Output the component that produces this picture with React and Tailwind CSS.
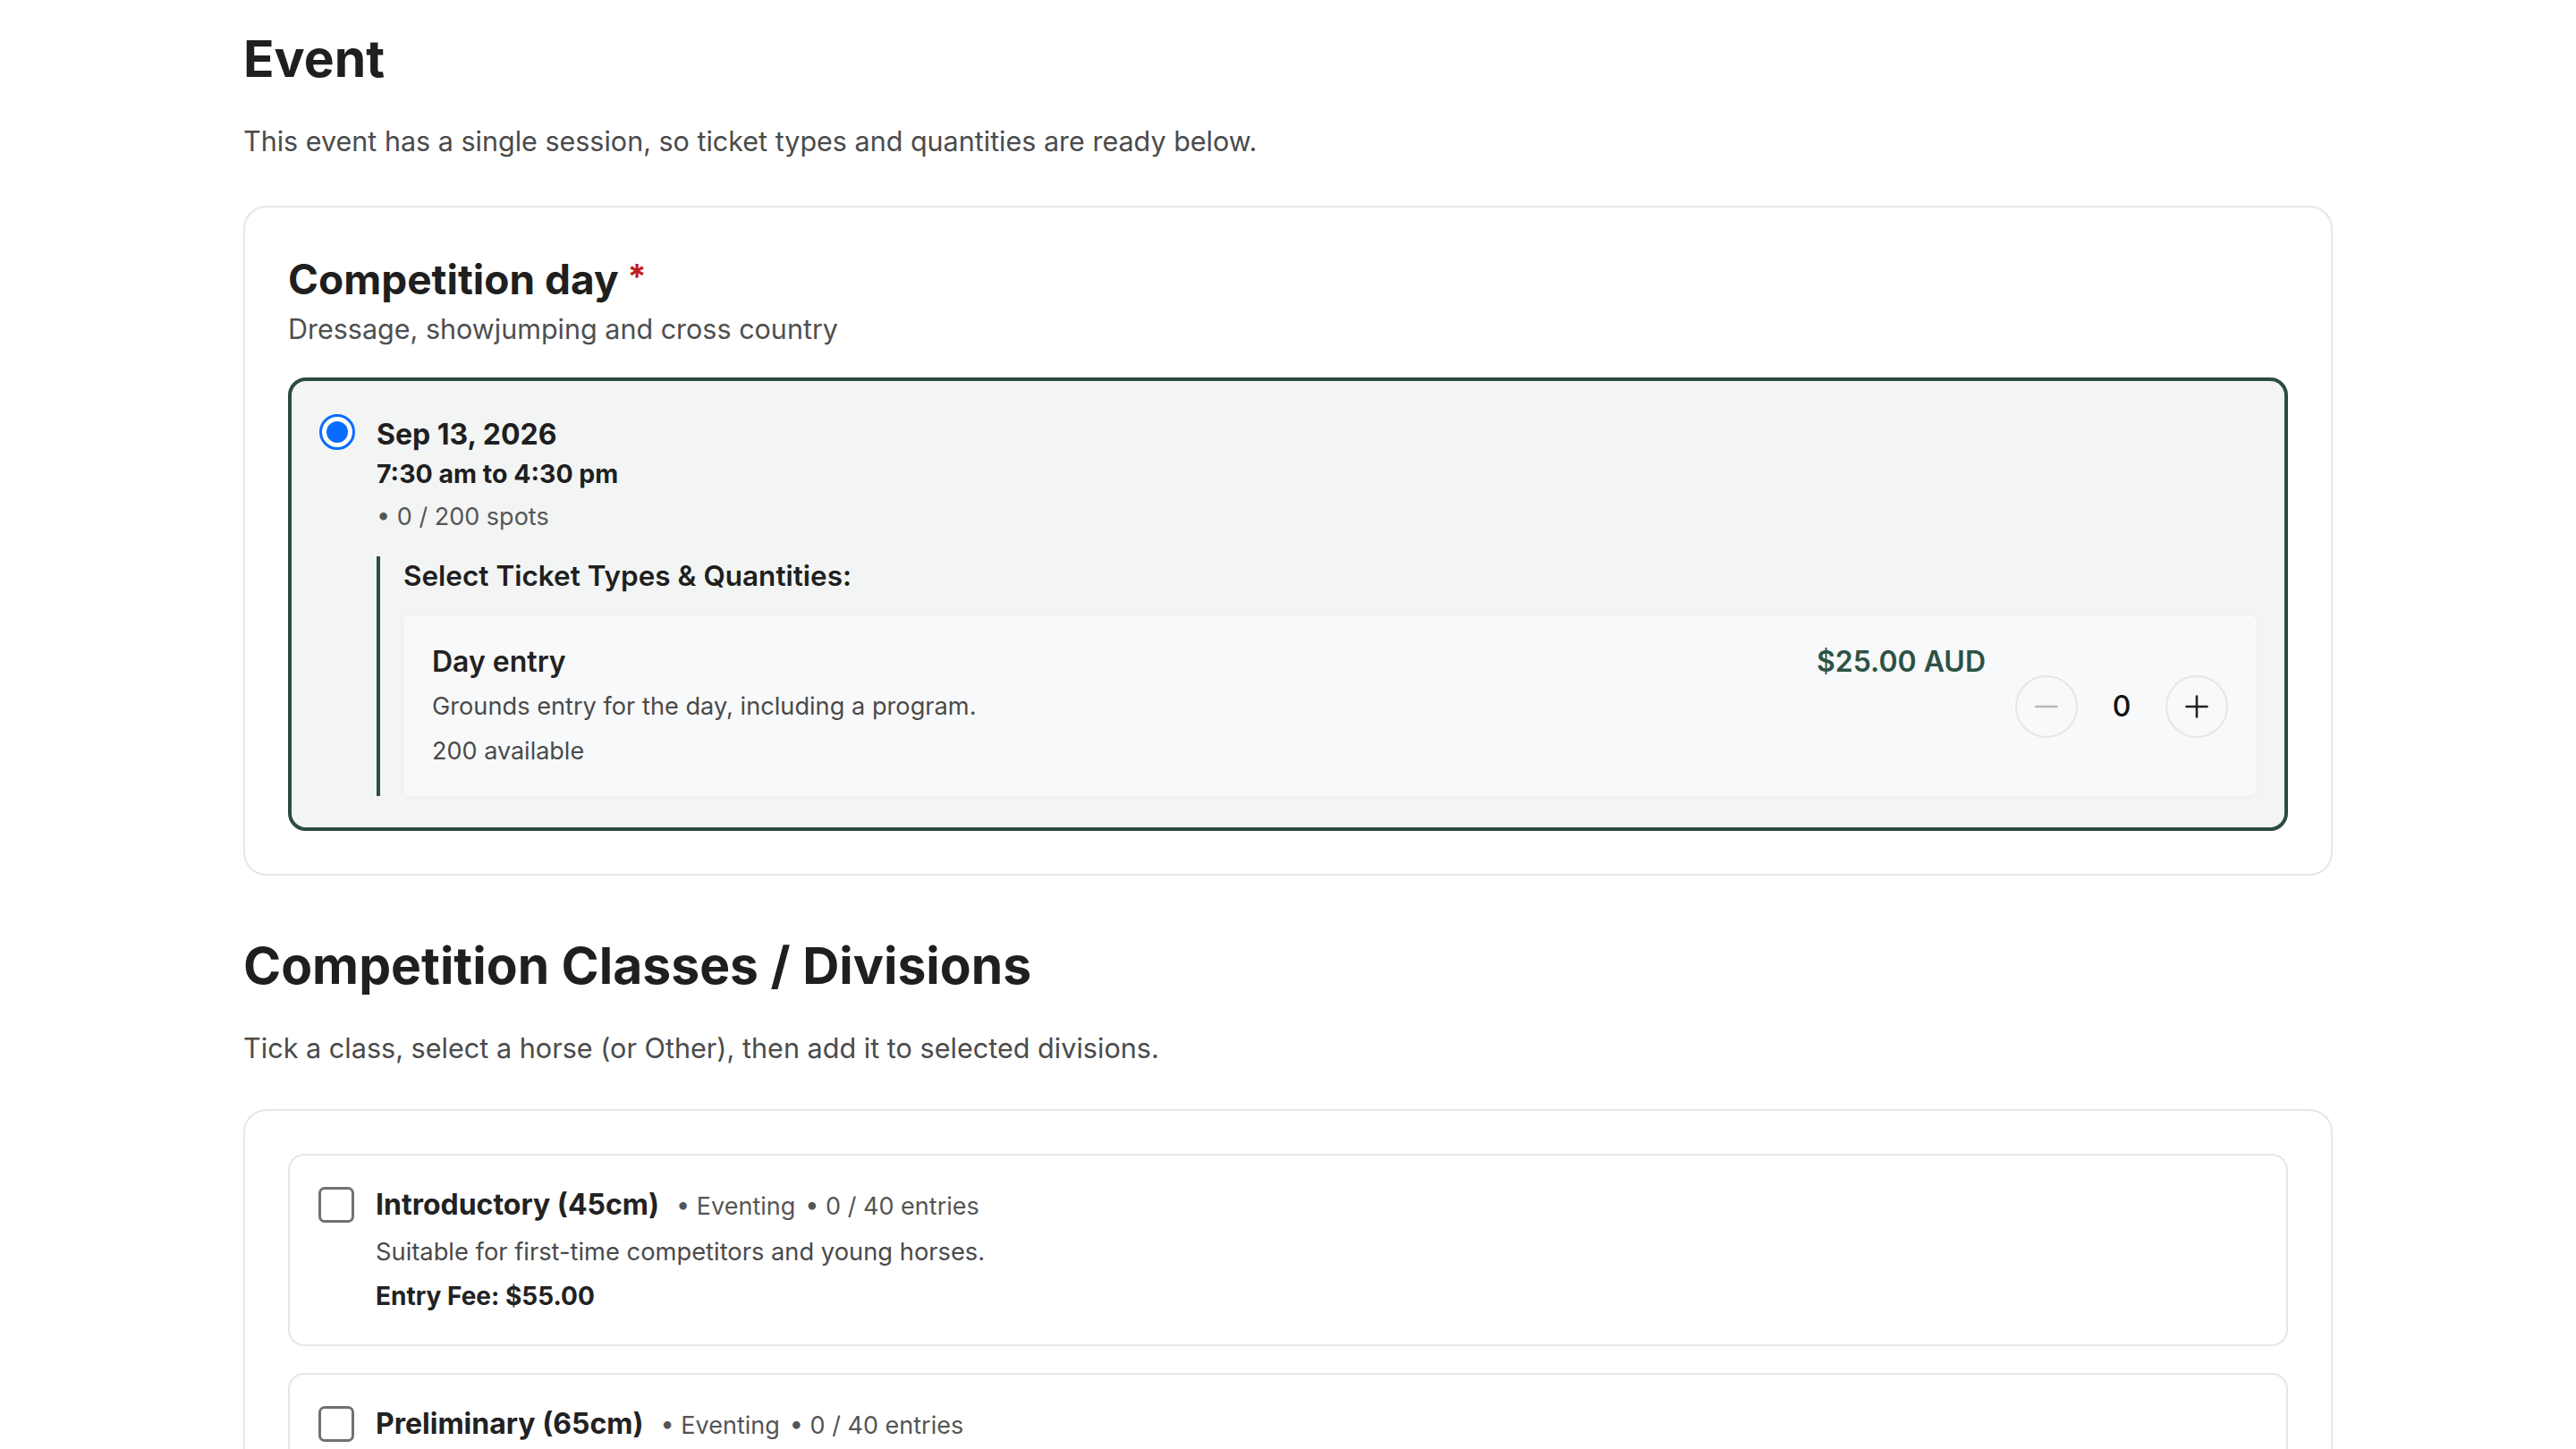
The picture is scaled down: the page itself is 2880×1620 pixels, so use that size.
import React from 'react';

const font = { fontFamily: 'Inter, "Noto Sans", "Liberation Sans", sans-serif' };

function Radio() {
  return (
    <div className="mt-[-1px] flex h-10 w-10 shrink-0 items-center justify-center rounded-full border-[3px] border-[#0a6cff] bg-white">
      <div className="h-[24px] w-[24px] rounded-full bg-[#0a6cff]" />
    </div>
  );
}

function StepButton({ kind }) {
  const stroke = kind === 'minus' ? '#b5b8ba' : '#222222';
  return (
    <button className="flex h-[70px] w-[70px] items-center justify-center rounded-full border-2 border-[#e4e6e8] bg-[#f8f9fa]">
      <svg width="26" height="26" viewBox="0 0 26 26" fill="none" stroke={stroke} strokeWidth="2.6" strokeLinecap="round">
        <line x1="1.5" y1="13" x2="24.5" y2="13" />
        {kind === 'plus' && <line x1="13" y1="1.5" x2="13" y2="24.5" />}
      </svg>
    </button>
  );
}

function TicketRow() {
  return (
    <div className="flex items-center rounded-[8px] bg-[#f8f9fa] px-[32px] pt-[32px] pb-[30px] shadow-[0_0_6px_rgba(0,0,0,0.04)]">
      <div className="flex-1">
        <div className="text-[32px] leading-[40px] font-semibold text-[#222]">Day entry</div>
        <div className="mt-[10px] text-[27.2px] leading-[40px] text-[#4a4a4a]">Grounds entry for the day, including a program.</div>
        <div className="mt-[10px] text-[27px] leading-[40px] text-[#4a4a4a]">200 available</div>
      </div>
      <div className="self-start text-[32px] leading-[40px] font-semibold text-[#2d5243]">$25.00 AUD</div>
      <div className="ml-[33px] flex items-center">
        <StepButton kind="minus" />
        <span className="w-[98px] text-center text-[32px] font-medium text-[#111]">0</span>
        <StepButton kind="plus" />
      </div>
    </div>
  );
}

const classes = [
  { name: 'Introductory (45cm)', desc: 'Suitable for first-time competitors and young horses.', fee: '$55.00' },
  { name: 'Preliminary (65cm)', desc: 'For horses and riders stepping up to their first full event.', fee: '$65.00' },
];

function ClassItem({ c }) {
  return (
    <div className="flex items-start gap-6 rounded-[18px] border-2 border-[#e4e6e8] bg-white px-[32px] pt-[33px] pb-[34px]">
      <div className="mt-[2px] h-10 w-10 shrink-0 rounded-[7px] border-[3px] border-[#6f7173] bg-white" />
      <div>
        <div className="flex items-baseline">
          <span className="text-[32px] leading-[44px] font-bold text-[#222]">{c.name}</span>
          <span className="ml-[19px] text-[27px] text-[#555]">• Eventing</span>
          <span className="ml-[11px] text-[27px] text-[#555]">• 0 / 40 entries</span>
        </div>
        <div className="mt-[10px] text-[27.3px] leading-[40px] text-[#4a4a4a]">{c.desc}</div>
        <div className="mt-[9px] text-[28px] leading-[40px] font-bold text-[#222]">Entry Fee: {c.fee}</div>
      </div>
    </div>
  );
}

export default function App() {
  return (
    <div className="min-h-screen bg-white text-[#222]" style={font}>
      <div className="mx-auto w-[2336px] pt-[32px] pb-[80px]">
        {/* Event */}
        <h1 className="text-[57px] leading-[68px] font-bold text-[#1f1f1f]">Event</h1>
        <p className="mt-[36px] text-[30.5px] leading-[44px] text-[#4b4b4b]">
          This event has a single session, so ticket types and quantities are ready below.
        </p>

        <div className="mt-[50px] rounded-[26px] border-2 border-[#e6e6e6] bg-white p-[48px]">
          <h2 className="text-[46px] leading-[64px] font-bold text-[#1f1f1f]">
            Competition day<span className="relative top-[-6px] ml-[10px] text-[38px] text-[#c0201b]">*</span>
          </h2>
          <p className="text-[30.5px] leading-[42px] text-[#4f4f4f]">Dressage, showjumping and cross country</p>

          <div className="mt-[33px] rounded-[20px] border-4 border-[#2c4c40] bg-[#f3f5f4] px-[31px] pt-[38px] pb-[35px]">
            <div className="flex items-start gap-6">
              <Radio />
              <div className="flex-1">
                <div className="text-[32px] leading-[44px] font-bold text-[#1f1f1f]">Sep 13, 2026</div>
                <div className="text-[28.5px] leading-[44px] font-bold text-[#1f1f1f]">7:30 am to 4:30 pm</div>
                <div className="mt-[4px] text-[27px] leading-[44px] text-[#555]">• 0 / 200 spots</div>

                <div className="mt-[22px] border-l-4 border-[#2c4c40] pl-[26px]">
                  <div className="text-[31.5px] leading-[44px] font-semibold text-[#1f1f1f]">Select Ticket Types &amp; Quantities:</div>
                  <div className="mt-[22px]">
                    <TicketRow />
                  </div>
                </div>
              </div>
            </div>
          </div>
        </div>

        {/* Classes */}
        <h1 className="mt-[67px] text-[57px] leading-[68px] font-bold text-[#1f1f1f]">Competition Classes / Divisions</h1>
        <p className="mt-[36px] text-[30.6px] leading-[44px] text-[#4b4b4b]">
          Tick a class, select a horse (or Other), then add it to selected divisions.
        </p>

        <div className="mt-[46px] flex flex-col gap-[30px] rounded-[26px] border-2 border-[#e6e6e6] bg-white p-[48px]">
          {classes.map((c) => (
            <ClassItem key={c.name} c={c} />
          ))}
        </div>
      </div>
    </div>
  );
}
